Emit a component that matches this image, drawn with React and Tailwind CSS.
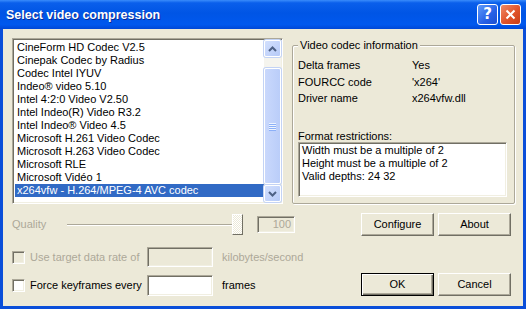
const codecs = [
  "CineForm HD Codec V2.5",
  "Cinepak Codec by Radius",
  "Codec Intel IYUV",
  "Indeo® video 5.10",
  "Intel 4:2:0 Video V2.50",
  "Intel Indeo(R) Video R3.2",
  "Intel Indeo® Video 4.5",
  "Microsoft H.261 Video Codec",
  "Microsoft H.263 Video Codec",
  "Microsoft RLE",
  "Microsoft Vidéo 1",
  "x264vfw - H.264/MPEG-4 AVC codec",
];

const sunken =
  "border border-t-[#ACA899] border-l-[#ACA899] border-b-white border-r-white shadow-[inset_1px_1px_0_#716F64,inset_-1px_-1px_0_#F1EFE2]";

const raised =
  "border border-t-white border-l-white border-b-[#716F64] border-r-[#716F64] shadow-[inset_-1px_-1px_0_#ACA899] bg-[#ECE9D8]";

function Arrow({ up }) {
  return (
    <svg width="9" height="6" viewBox="0 0 9 6">
      <polyline
        points={up ? "1,5 4.5,1.5 8,5" : "1,1 4.5,4.5 8,1"}
        fill="none"
        stroke="#4D6185"
        strokeWidth="2"
      />
    </svg>
  );
}

function ScrollButton({ up }) {
  return (
    <div className="h-[17px] w-[17px] flex items-center justify-center rounded-[2px] border border-white bg-[linear-gradient(135deg,#D3E0FD,#B6CAF8)] shadow-[0_0_0_1px_#C3D3F5]">
      <Arrow up={up} />
    </div>
  );
}

function Checkbox({ disabled }) {
  return (
    <div
      className={`w-[13px] h-[13px] shrink-0 ${sunken} ${
        disabled ? "bg-[#ECE9D8]" : "bg-white"
      }`}
    />
  );
}

function Button({ children, isDefault }) {
  if (isDefault) {
    return (
      <div className="w-[73px] h-[23px] flex items-center justify-center border border-black bg-[#ECE9D8] shadow-[inset_1px_1px_0_#fff,inset_-1px_-1px_0_#716F64,inset_-2px_-2px_0_#ACA899]">
        {children}
      </div>
    );
  }
  return (
    <div className={`w-[73px] h-[23px] flex items-center justify-center ${raised}`}>
      {children}
    </div>
  );
}

export default function App() {
  return (
    <div className="w-[526px] h-[309px] flex flex-col overflow-hidden bg-[#0A4ED9] font-['Liberation_Sans',Arial,sans-serif] text-[11px] text-black">
      {/* title bar */}
      <div className="h-[29px] shrink-0 flex items-center pl-[6px] pr-[5px] bg-[linear-gradient(to_bottom,#3A8CFB_0%,#0A5FEB_10%,#0055E5_45%,#0058EE_85%,#0047D6_100%)]">
        <span className="text-white font-bold text-[12.5px] pt-[1px] [text-shadow:1px_1px_0_#0C2A94]">
          Select video compression
        </span>
        <div className="ml-auto flex gap-[2px]">
          <div className="w-[21px] h-[21px] rounded-[3px] border border-white flex items-center justify-center bg-[linear-gradient(135deg,#5E9BFB,#2660E6_60%,#1D4FD0)] text-white font-bold text-[15px] leading-none font-['DejaVu_Sans',sans-serif]">
            ?
          </div>
          <div className="w-[21px] h-[21px] rounded-[3px] border border-white flex items-center justify-center bg-[linear-gradient(135deg,#F08A67,#E0532A_55%,#C93D17)]">
            <svg width="11" height="11" viewBox="0 0 11 11">
              <path d="M1.5 1.5 L9.5 9.5 M9.5 1.5 L1.5 9.5" stroke="#fff" strokeWidth="2" />
            </svg>
          </div>
        </div>
      </div>

      {/* body */}
      <div className="flex-1 mx-[3px] mb-[3px] bg-[#ECE9D8] flex flex-col">
        <div className="flex pt-[9px] pl-[9px]">
          {/* codec list */}
          <div className={`w-[271px] h-[166px] flex bg-white ${sunken} p-[1px]`}>
            <div className="flex-1 pt-[1px] pl-[1px] overflow-hidden">
              {codecs.map((c, i) => (
                <div
                  key={c}
                  className={`h-[13px] leading-[13px] pl-[2px] whitespace-nowrap ${
                    i === codecs.length - 1 ? "bg-[#316AC5] text-white" : ""
                  }`}
                >
                  {c}
                </div>
              ))}
            </div>
            <div className="w-[17px] flex flex-col bg-[#F5F4EE]">
              <ScrollButton up />
              <div className="flex-1 pt-[11px] pb-[1px] flex">
                <div className="flex-1 rounded-[2px] border border-white bg-[linear-gradient(90deg,#C9D8FC,#BACDF9)] shadow-[0_0_0_1px_#C3D3F5] flex flex-col items-center justify-center gap-[1px]">
                  <div className="w-[7px] h-[1px] bg-[#EEF4FE] shadow-[0_1px_0_#8CB0F8]" />
                  <div className="w-[7px] h-[1px] bg-[#EEF4FE] shadow-[0_1px_0_#8CB0F8]" />
                  <div className="w-[7px] h-[1px] bg-[#EEF4FE] shadow-[0_1px_0_#8CB0F8]" />
                  <div className="w-[7px] h-[1px] bg-[#EEF4FE] shadow-[0_1px_0_#8CB0F8]" />
                </div>
              </div>
              <ScrollButton />
            </div>
          </div>

          {/* codec info */}
          <fieldset className="ml-[9px] w-[223px] h-[166px] border border-[#ACA899] rounded-[2px] px-[5px] shadow-[inset_1px_1px_0_#fff,1px_1px_0_#fff]">
            <legend className="px-[2px] leading-[14px] bg-[#ECE9D8]">Video codec information</legend>
            <div className="mt-[5px] grid grid-cols-[114px_1fr] leading-[16.5px]">
              <span>Delta frames</span>
              <span>Yes</span>
              <span>FOURCC code</span>
              <span>'x264'</span>
              <span>Driver name</span>
              <span>x264vfw.dll</span>
            </div>
            <div className="mt-[24px] leading-[11px]">Format restrictions:</div>
            <div className={`w-[209px] h-[55px] bg-white ${sunken} pl-[3px] pt-[1px] leading-[13px]`}>
              <div>Width must be a multiple of 2</div>
              <div>Height must be a multiple of 2</div>
              <div>Valid depths: 24 32</div>
            </div>
          </fieldset>
        </div>

        {/* lower controls */}
        <div className="flex pl-[9px] mt-[9px]">
          <div className="w-[349px] flex flex-col">
            <div className="h-[23px] flex items-center text-[#ACA899]">
              <span className="w-[55px]">Quality</span>
              <div className="w-[176px] h-full flex items-center">
                <div className="flex-1 h-[2px] border-t border-t-[#ACA899] border-b border-b-white" />
                <div className="w-[11px] h-[21px] border border-t-white border-l-white border-b-[#716F64] border-r-[#716F64] bg-[repeating-conic-gradient(#FFFFFF_0_25%,#ECE9D8_0_50%)] bg-[length:2px_2px]" />
              </div>
              <div className={`ml-[14px] w-[38px] h-[17px] ${sunken} text-right pr-[3px] leading-[15px]`}>
                100
              </div>
            </div>
            <div className="mt-[11px] h-[20px] flex items-center">
              <div className="w-[135px] flex items-center gap-[5px] text-[#ACA899]">
                <Checkbox disabled />
                <span>Use target data rate of</span>
              </div>
              <div className={`w-[66px] h-full ${sunken}`} />
              <span className="ml-[9px] text-[#ACA899]">kilobytes/second</span>
            </div>
            <div className="mt-[8px] h-[21px] flex items-center">
              <div className="w-[135px] flex items-center gap-[5px]">
                <Checkbox />
                <span>Force keyframes every</span>
              </div>
              <div className={`w-[66px] h-full bg-white ${sunken}`} />
              <span className="ml-[9px]">frames</span>
            </div>
          </div>

          <div className="flex flex-col">
            <div className="flex gap-[4px]">
              <Button>Configure</Button>
              <Button>About</Button>
            </div>
            <div className="flex gap-[4px] mt-[37px]">
              <Button isDefault>OK</Button>
              <Button>Cancel</Button>
            </div>
          </div>
        </div>
      </div>
    </div>
  );
}
